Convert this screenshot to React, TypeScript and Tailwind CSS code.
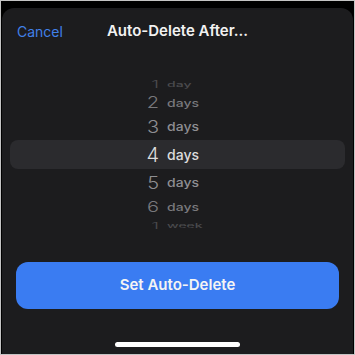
import React from "react";

type Row = { n: string; u: string; h: string; s: number; c: string };

const rowsAbove: Row[] = [
  { n: "1", u: "day", h: "h-[18px]", s: 0.5, c: "text-[#4a4a4d]" },
  { n: "2", u: "days", h: "h-[20px]", s: 0.76, c: "text-[#78787c]" },
  { n: "3", u: "days", h: "h-[27px]", s: 0.88, c: "text-[#8e8e92]" },
];
const rowsBelow: Row[] = [
  { n: "5", u: "days", h: "h-[27px]", s: 0.86, c: "text-[#8e8e92]" },
  { n: "6", u: "days", h: "h-[22px]", s: 0.74, c: "text-[#78787c]" },
  { n: "1", u: "week", h: "h-[16px]", s: 0.42, c: "text-[#4a4a4d]" },
];

function PickerRow({ r }: { r: Row }) {
  return (
    <div className={`${r.h} flex items-center ${r.c}`}>
      <div className="flex items-center" style={{ transform: `scaleY(${r.s})` }}>
        <span className="w-[157px] text-right text-[20px] leading-none font-light">{r.n}</span>
        <span className="ml-[8px] text-[14px] leading-none font-medium">{r.u}</span>
      </div>
    </div>
  );
}

export default function App() {
  return (
    <div
      className="w-[355px] h-[355px] border border-[#c4c4c4] bg-black flex flex-col pt-[7px] overflow-hidden"
      style={{ fontFamily: "Inter, 'Noto Sans', sans-serif" }}
    >
      <div className="flex-1 mx-[1px] bg-[#1c1c1e] rounded-t-[12px] flex flex-col">
        <div className="relative h-[46px] flex items-center justify-center">
          <span className="absolute left-[15px] text-[14px] text-[#4180e8]">Cancel</span>
          <span className="text-[15px] font-semibold text-[#f2f2f2]">Auto-Delete After...</span>
        </div>
        <div className="mt-[21px] flex flex-col">
          {rowsAbove.map((r, i) => (
            <PickerRow key={"a" + i} r={r} />
          ))}
          <div className="h-[29px] mx-[8px] rounded-[8px] bg-[#2b2b2e] flex items-center text-[#dcdcdc]">
            <span className="w-[149px] text-right text-[20px] leading-none font-light">4</span>
            <span className="ml-[8px] text-[14px] leading-none font-medium">days</span>
          </div>
          {rowsBelow.map((r, i) => (
            <PickerRow key={"b" + i} r={r} />
          ))}
        </div>
        <button className="mt-[28px] mx-[14px] h-[47px] rounded-[12px] bg-[#3a7cf2] text-[15px] font-semibold text-[#f4f4f4]">
          Set Auto-Delete
        </button>
        <div className="mt-[33px] self-center w-[125px] h-[5px] rounded-full bg-white" />
      </div>
    </div>
  );
}
